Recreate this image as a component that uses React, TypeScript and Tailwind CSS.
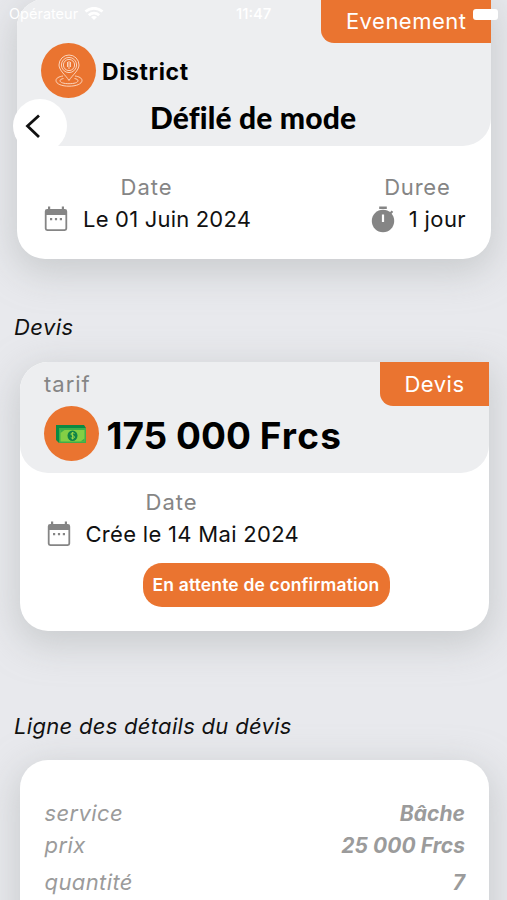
const title = "font-['Lato',sans-serif] font-black text-black whitespace-pre";
const display = "font-['Inter',sans-serif] font-bold text-black whitespace-pre";

function CalendarIcon() {
  return (
    <svg viewBox="0 0 24 26" className="h-[26px] w-6 shrink-0 fill-[#858585]">
      <path fillRule="evenodd" d="M4 .5h2.200V3h11.600V.5H20V3h.8A2.400 2.400 0 0 1 23.200 5.400v17.200a2.400 2.400 0 0 1-2.400 2.400H3.200A2.400 2.400 0 0 1 .8 22.600V5.400A2.400 2.400 0 0 1 3.200 3H4zM2.600 9v13.200a1 1 0 0 0 1 1h16.800a1 1 0 0 0 1-1V9z" />
      <path d="M6 12h2.200v2.200H6zM10.900 12h2.200v2.200h-2.200zM15.800 12H18v2.200h-2.200z" />
    </svg>
  );
}

function TimerIcon() {
  return (
    <svg viewBox="0 0 24 27" className="h-[27px] w-6 shrink-0">
      <path d="M8.200.6h7.600v2.300H8.200z" fill="#858585" />
      <path d="m19.200 7.500 2.300-2.300" stroke="#858585" strokeWidth="2.200" />
      <circle cx="12" cy="15" r="11.200" fill="#858585" />
      <path d="M10.900 8.500h2.200v7.500h-2.200z" fill="#fff" />
    </svg>
  );
}

function PinIcon() {
  return (
    <svg viewBox="0 0 28 34" className="h-[34px] w-7 fill-none stroke-[#fbd3ba] stroke-[1]">
      <path d="M14 26.500C11 21.500 4 16.500 4 11a10 10 0 0 1 20 0c0 5.500-7 10.500-10 15.500z" />
      <circle cx="14" cy="11" r="7.600" />
      <circle cx="14" cy="11" r="5.600" />
      <path d="M14 7v8M12.500 8v5M15.500 8v5" />
      <path d="M8 22c-4 .6-7 2-7 4.500C1 30 7 32.200 14 32.200S27 30 27 26.500c0-2.500-3-3.900-7-4.500" />
      <path d="M8.500 24.500c-2 .4-3.500 1.100-3.500 2.200 0 1.900 4 3 9 3s9-1.100 9-3c0-1.100-1.500-1.800-3.500-2.200" />
    </svg>
  );
}

function CashIcon() {
  return (
    <svg viewBox="0 0 32 20" className="h-5 w-8">
      <path d="M1 1h28l2 3v15H4l-3-3z" fill="#0a8a43" />
      <path d="M4 4h27v15H4z" fill="#3fae49" />
      <path d="M5.500 6h24v11.500h-24z" fill="#83cf45" />
      <path d="M5.500 6h4l-4 3zM29.500 17.500h-4l4-3z" fill="#3fae49" />
      <ellipse cx="17.500" cy="11.700" rx="5" ry="5.300" fill="#108447" />
      <path d="M19.500 9.500c-1-1-3.500-1-3.500.6 0 1.800 3.500 1.300 3.500 3 0 1.500-2.700 1.500-3.700.5M17.600 8v7.500" fill="none" stroke="#a6dc4c" strokeWidth=".9" />
    </svg>
  );
}

function Row({ label, value, className }: { label: string; value: string; className: string }) {
  return (
    <div className={`flex h-8 items-baseline justify-between leading-8 text-[#9b9b9b] italic ${className}`}>
      <span className="tracking-[0.4px]">{label}</span>
      <span className="text-[21px] font-bold tracking-[0.05px] whitespace-pre">{value}</span>
    </div>
  );
}

export default function App() {
  return (
    <main className="relative h-[900px] w-[507px] overflow-hidden bg-[#e8e9ed] font-['Inter',sans-serif] text-[22px] whitespace-nowrap text-[#111]">
      <section className="-mt-px ml-[17px] h-[260px] w-[474px] overflow-hidden rounded-[28px] rounded-tr-none bg-white shadow-[0_10px_35px_4px_#aeb1b180]">
        <header className="h-[147px] rounded-b-[28px] bg-[#edeef0]">
          <div className="ml-auto flex h-11 w-[170px] justify-end rounded-bl-[13px] bg-[#ea7430] pr-[24.500px] leading-[45px] tracking-[0.5px] text-white">Evenement</div>
          <div className="ml-6 flex h-[55px] items-center gap-[6px]">
            <div className="flex size-[55px] items-center justify-center rounded-full bg-[#ea7430]"><PinIcon /></div>
            <span className={`${display} pt-[3px] text-[23px] tracking-[0.6px]`}>District</span>
          </div>
          <h1 className={`${title} pl-[133px] text-[30px] leading-[38px] tracking-[0.15px]`}>Défilé de mode</h1>
        </header>
        <div className="flex justify-between pt-[25px] pr-[25px] pl-[27px] leading-8">
          <div>
            <div className="pl-[76.500px] tracking-[1px] text-[#858585]">Date</div>
            <div className="flex items-center"><CalendarIcon /><span className="ml-[15px] tracking-[0.2px]">Le 01 Juin 2024</span></div>
          </div>
          <div>
            <div className="pl-[13.500px] tracking-[0.8px] text-[#858585]">Duree</div>
            <div className="flex items-center"><TimerIcon /><span className="ml-[14px] tracking-[0.4px]">1 jour</span></div>
          </div>
        </div>
      </section>

      <h2 className="mt-[52px] ml-[14px] leading-8 tracking-[0.4px] italic">Devis</h2>

      <section className="mt-[19px] ml-[19.500px] h-[269px] w-[469.500px] overflow-hidden rounded-[28px] rounded-tr-none bg-white shadow-[0_10px_35px_4px_#aeb1b180]">
        <header className="h-[111px] rounded-b-[28px] bg-[#edeef0]">
          <div className="flex justify-between pl-[24.500px] leading-11">
            <span className="tracking-[1px] text-[#858585]">tarif</span>
            <span className="flex h-11 w-[109px] justify-end rounded-bl-[13px] bg-[#ea7430] pr-[24.500px] tracking-[0.5px] text-white">Devis</span>
          </div>
          <div className="ml-6 flex h-[55px] items-center gap-[8px]">
            <div className="flex size-[55px] items-center justify-center rounded-full bg-[#ea7430]"><CashIcon /></div>
            <span className={`${display} pt-[5px] text-[37px]`}>175 000 <span className="tracking-[1.200px]">Frcs</span></span>
          </div>
        </header>
        <div className="pt-[13px] pl-[27px] leading-8">
          <div className="pl-[99px] tracking-[1px] text-[#858585]">Date</div>
          <div className="flex items-center"><CalendarIcon /><span className="ml-[15px] tracking-[0.3px]">Crée le 14 Mai 2024</span></div>
        </div>
        <button className="mt-[12.500px] ml-[123px] flex h-11 w-[247px] items-center justify-center rounded-[19px] bg-[#ea7430] pt-px text-[17.500px] font-semibold tracking-[0.15px] text-white">En attente de confirmation</button>
      </section>

      <h2 className="mt-[79px] ml-[14px] leading-8 tracking-[0.3px] italic">Ligne des détails du dévis</h2>

      <section className="mt-[18px] ml-[19.500px] h-[200px] w-[469.500px] rounded-[28px] bg-white pr-6 pl-[25px] pt-[37px] shadow-[0_10px_35px_4px_#aeb1b180]">
        <Row label="service" value="Bâche" className="" />
        <Row label="prix" value="25 000 Frcs" className="" />
        <Row label="quantité" value="7" className="mt-[5px]" />
      </section>

      <div className="absolute top-[98.500px] left-[13px] size-[54px] rounded-full bg-white">
        <svg viewBox="0 0 54 54" className="size-[54px]"><path d="M26 16.500 14.500 27 26 38" fill="none" stroke="#111" strokeWidth="2.800" /></svg>
      </div>

      <div className="absolute top-[4px] left-[9px] flex w-[489px] items-center text-[14.500px] leading-5 text-white">
        <span className="w-[71px]">Opérateur</span>
        <svg viewBox="0 0 20 14" className="ml-[4px] h-[14px] w-5 fill-none stroke-white stroke-[2.800]">
          <path d="M1.500 4.500c5-4.300 12-4.300 17 0M4.800 8.200c3-2.600 7.400-2.600 10.400 0" />
          <path d="m10 13-3-3c1.800-1.500 4.200-1.500 6 0z" className="fill-white stroke-none" />
        </svg>
        <span className="ml-[132px] text-[15px] font-medium">11:47</span>
        <div className="ml-auto h-[11px] w-[25px] rounded-[3px] border border-white/50 bg-white" />
      </div>
    </main>
  );
}
